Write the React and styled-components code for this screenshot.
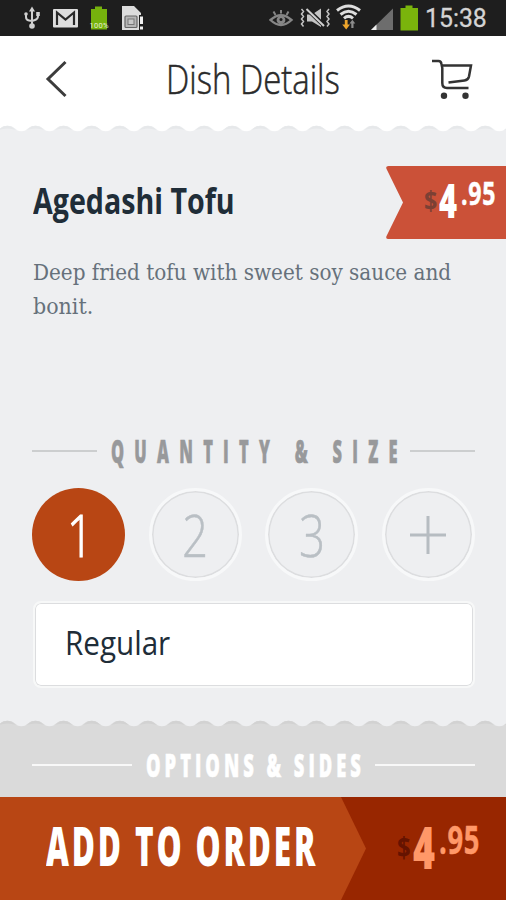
import { useLayoutEffect, useRef, useState } from 'react';
import styled, { createGlobalStyle } from 'styled-components';

const SANS = "'Open Sans', 'Noto Sans', sans-serif";
const SERIF = "'DejaVu Serif Condensed', 'DejaVu Serif', serif";

const GlobalStyle = createGlobalStyle`
    * {
        box-sizing: border-box;
    }
    body {
        margin: 0;
    }
    button {
        border: none;
        padding: 0;
        background: none;
        font: inherit;
        color: inherit;
    }
`;

const FitBox = styled.span`
    display: block;
    flex: none;
    width: ${(p) => p.$width}px;
    white-space: nowrap;
    text-align: left;
`;

const FitInner = styled.span`
    display: inline-block;
    transform-origin: left center;
`;

// narrows the text so that it fills exactly the given width
const FitText = ({ width, children, ...rest }) => {
    const ref = useRef(null);
    const [scale, setScale] = useState(1);

    useLayoutEffect(() => {
        setScale(width / ref.current.offsetWidth);
    }, [width, children]);

    return (
        <FitBox $width={width} {...rest}>
            <FitInner ref={ref} style={{ transform: `scaleX(${scale})` }}>
                {children}
            </FitInner>
        </FitBox>
    );
};

const Screen = styled.div`
    display: flex;
    flex-direction: column;
    width: 506px;
    height: 900px;
    overflow: hidden;
    background: #eeeff1;
    font-family: ${SANS};
`;

const StatusBar = styled.div`
    display: flex;
    justify-content: space-between;
    height: 36px;
    background: #1e1e1e;
`;

const StatusRight = styled.div`
    display: flex;
    padding-right: 19px;
`;

const Clock = styled(FitText)`
    font-family: Roboto, sans-serif;
    font-size: 26px;
    line-height: 36px;
    color: #d4d4d4;
    -webkit-text-stroke: 0.3px #d4d4d4;
`;

const Header = styled.div`
    display: flex;
    align-items: center;
    justify-content: space-between;
    height: 89px;
    padding: 0 33px 3px 45px;
    background: #fff;
`;

const PageTitle = styled(FitText)`
    margin-left: 5px;
    font-size: 39.5px;
    font-weight: 300;
    line-height: 54px;
    color: #2a2a2a;
    -webkit-text-stroke: 0.5px #2a2a2a;
`;

const ScallopEdge = styled.svg`
    display: block;
    flex: none;
    width: 506px;
    height: 8px;
    background: ${(p) => p.$above};
`;

const Dish = styled.div`
    height: 294px;
    padding: 33px 0 0 33px;
`;

const DishTop = styled.div`
    display: flex;
    justify-content: space-between;
    height: 73px;
`;

const DishName = styled(FitText)`
    font-size: 36px;
    font-weight: 700;
    line-height: 70px;
    color: #202d38;
`;

const Tag = styled.div`
    position: relative;
    width: 120px;
`;

const TagShape = styled.svg`
    position: absolute;
    inset: 0;
`;

const Price = styled.div`
    display: flex;
    align-items: center;
`;

const TagPrice = styled(Price)`
    position: relative;
    height: 73px;
    padding: 0 0 5px 38px;
    color: #fff;
`;

const Currency = styled(FitText)`
    font-size: ${(p) => p.$size}px;
    font-weight: 700;
    line-height: 1;
    color: ${(p) => p.$color};
`;

const Whole = styled(FitText)`
    margin-left: 2px;
    font-size: ${(p) => p.$size}px;
    font-weight: 800;
    line-height: 1;
`;

const Cents = styled(FitText)`
    margin: -15px 0 0 4px;
    font-size: ${(p) => p.$size}px;
    font-weight: 700;
    line-height: 1;
    letter-spacing: 1px;
    -webkit-text-stroke: 0.5px currentColor;
`;

const Description = styled.div`
    margin-top: 16px;
    font-family: ${SERIF};
    font-size: 22.5px;
    line-height: 34px;
    color: #66717b;
`;

const Rule = styled.div`
    flex: 1;
    height: 2px;
    background: currentColor;
`;

// the letter spacing after the last letter must not push the right rule away
const HeadingText = styled(FitText)`
    margin-right: -${(p) => p.$trail}px;
    font-size: 32px;
    font-weight: 800;
    line-height: 50px;
    letter-spacing: ${(p) => p.$spacing}px;
    -webkit-text-stroke: 0.6px currentColor;
`;

const HeadingRow = styled.div`
    display: flex;
    align-items: center;
    gap: 14px;
    height: 50px;
    margin: 0 31px 0 32px;
    color: ${(p) => (p.$tone === 'white' ? '#f8f8f8' : '#cccecf')};

    ${HeadingText} {
        color: ${(p) => (p.$tone === 'white' ? '#fff' : '#98999b')};
    }
`;

const QuantityRow = styled.div`
    display: flex;
    justify-content: space-between;
    height: 93px;
    margin: 12px 31px 0 32px;
`;

const QuantityButton = styled.button`
    display: flex;
    align-items: center;
    justify-content: center;
    width: 93px;
    height: 93px;
    padding-left: ${(p) => (p.$active ? '3px' : '0')};
    border: ${(p) => (p.$active ? 'none' : '3px solid #f7f8f9')};
    border-radius: 50%;
    box-shadow: ${(p) => (p.$active ? 'none' : 'inset 0 0 0 1.5px #dcdddf')};
    background: ${(p) => (p.$active ? '#b84614' : 'transparent')};
    color: ${(p) => (p.$active ? '#fff' : '#b9bfc4')};
    font-size: 58px;
    font-weight: 300;
    line-height: 80px;
    -webkit-text-stroke: ${(p) => (p.$active ? '1.2px' : '0.5px')} currentColor;
`;

const Select = styled.div`
    height: 87px;
    margin: 20px 31px 32px 33px;
    padding-left: 30px;
    border: 2px solid #f7f8f8;
    border-radius: 8px;
    box-shadow: inset 0 0 0 1px #dcdddf;
    background: #fff;
    font-size: 33px;
    line-height: 80px;
    color: #202d38;
`;

const Options = styled.div`
    height: 69px;
    padding-top: 12px;
    background: #dadada;
`;

const OrderBar = styled.div`
    display: flex;
    height: 103px;
    background: #982600;
`;

const AddButton = styled.button`
    width: 366px;
    padding: 0 0 7px 46px;
    background: #b84614;
    clip-path: polygon(0 0, 341px 0, 366px 50%, 341px 100%, 0 100%);
    font-size: 55px;
    font-weight: 800;
    line-height: 96px;
    color: #fff;
    letter-spacing: 5px;
`;

const OrderPrice = styled(Price)`
    padding: 0 0 4px 31px;
    color: #ff9868;
`;

const Scallop = ({ name, above, fill, edge }) => (
    <ScallopEdge viewBox="0 0 506 8" $above={above}>
        <defs>
            <pattern id={name} x="-6.7" width="28.11" height="8" patternUnits="userSpaceOnUse">
                <path d="M0 6.3C3 6.3 5 5 7.5 3C11 .1 17.1 .1 20.6 3C23.1 5 25.1 6.3 28.11 6.3V8H0Z" fill={fill} />
                <path d="M5 5L7.5 3C11 .1 17.1 .1 20.6 3L23.1 5Q14 2 5 5Z" fill={edge} />
            </pattern>
        </defs>
        <rect width="506" height="8" fill={`url(#${name})`} />
    </ScallopEdge>
);

const StatusIcons = () => (
    <svg width="150" height="36" viewBox="0 0 150 36">
        {/* usb */}
        <g fill="none" stroke="#d0d0d0" strokeWidth="2">
            <path d="M32 10V26M26 14V17Q26 20 29 20.5L32 21M38 14V16Q38 19 35 20L32 21" />
        </g>
        <path d="M32 6.5L35 11.5H29Z" fill="#d0d0d0" />
        <circle cx="32" cy="26" r="2.8" fill="#d0d0d0" />
        <circle cx="26" cy="14" r="1.8" fill="#d0d0d0" />
        <path d="M36.2 12H39.8V16H36.2Z" fill="#d0d0d0" />
        {/* gmail */}
        <rect x="53" y="9" width="25" height="18.5" rx="1" fill="#dedede" />
        <path d="M57 25V12.5L65.5 19.5L74 12.5V25" fill="none" stroke="#292929" strokeWidth="2.2" />
        {/* battery */}
        <path d="M95 6.5H102V9H107V29.5H91V9H95Z" fill="#76b20d" />
        <text x="89.5" y="28" fontSize="7.5" fontFamily="Roboto, sans-serif" fill="#e4efd0" textLength="19">
            100%
        </text>
        {/* sim card */}
        <path d="M122 6H134L141 13V15H139V30H122Z" fill="#dcdcdc" />
        <rect x="125" y="16" width="12" height="11.5" rx="1" fill="#b5b5b5" stroke="#666" strokeWidth="1.2" />
        <rect x="128" y="19" width="6" height="5.5" fill="#c8c8c8" stroke="#777" />
        <path d="M140 16.5H143V24H140ZM140 26.5H143V29.5H140Z" fill="#f0f0f0" />
    </svg>
);

const SignalIcons = () => (
    <svg width="156" height="36" viewBox="268 0 156 36">
        {/* eye */}
        <path d="M269.5 20Q280 10.5 290.5 20Q280 30 269.5 20Z" fill="none" stroke="#858585" strokeWidth="2.4" />
        <circle cx="280" cy="20" r="4.4" fill="#858585" />
        <circle cx="280" cy="19.5" r="1.5" fill="#1e1e1e" />
        <path d="M280 10V13.5M272.5 11.5L274.5 15M287.5 11.5L285.5 15" stroke="#858585" strokeWidth="2" />
        {/* vibrate, muted */}
        <path d="M306 14.5H311L320 8.5V27L311 21.5H306Z" fill="#c4c4c4" />
        <path d="M305 8L324 26.5" stroke="#1e1e1e" strokeWidth="4.5" />
        <path d="M305.5 9L323 26" stroke="#d0d0d0" strokeWidth="2" />
        <path
            d="M300.5 9l2 2.5l-2 2.5l2 2.5l-2 2.5l2 2.5l-2 2.5l2 2.5M328 9l-2 2.5l2 2.5l-2 2.5l2 2.5l-2 2.5l2 2.5l-2 2.5"
            fill="none"
            stroke="#c4c4c4"
            strokeWidth="1.5"
        />
        {/* wifi */}
        <g fill="none" stroke="#dedede" strokeWidth="3">
            <path d="M336 10.5Q347.5 1.5 359 10.5" />
            <path d="M339.5 14.5Q347.5 8 355.5 14.5" />
            <path d="M343 18.3Q347.5 14.5 352 18.3" />
        </g>
        <path d="M343.8 20H346.6V24.5H349L345.2 29.5L341.2 24.5H343.8Z" fill="#eda52c" />
        <path d="M350.3 28V23.5H348.5L351.4 19.8L354.3 23.5H352.5V28Z" fill="#8d8d8d" />
        {/* signal */}
        <path d="M392 8.5V30H370Z" fill="#6d6d6d" />
        <path d="M375.5 24.6V30H370Z" fill="#eee" />
        {/* battery */}
        <path d="M404.5 5.5H411.5V8H417V30.5H399.5V8H404.5Z" fill="#7ab40c" />
    </svg>
);

const BackIcon = () => (
    <svg width="24" height="38" viewBox="0 0 24 38" fill="none" stroke="#3c3c3c" strokeWidth="3">
        <path d="M20.5 2L3 19L20.5 36" />
    </svg>
);

const CartIcon = () => (
    <svg width="42" height="42" viewBox="431 59 42 42" fill="none" stroke="#333" strokeWidth="2.5">
        <path d="M432 62H438.5Q441 62 441.5 65L442.3 69V84Q442.3 89 447 89H468.5" />
        <path d="M442.3 66.5H471L469 77.5Q468.2 81 464.5 81.5L448.5 83.5" />
        <circle cx="444" cy="96.7" r="3.2" fill="#333" stroke="none" />
        <circle cx="465.5" cy="96.7" r="3.2" fill="#333" stroke="none" />
    </svg>
);

const PlusIcon = () => (
    <svg width="36" height="38" viewBox="0 0 36 38" stroke="#b6bcc1" strokeWidth="3">
        <path d="M0 19H36M18 0V38" />
    </svg>
);

const Heading = ({ children, width, tone, spacing, trail }) => (
    <HeadingRow $tone={tone}>
        <Rule />
        <HeadingText width={width} $spacing={spacing} $trail={trail}>
            {children}
        </HeadingText>
        <Rule />
    </HeadingRow>
);

const QUANTITIES = ['1', '2', '3'];

const App = () => {
    const [selected, setSelected] = useState('1');

    return (
        <Screen>
            <GlobalStyle />
            <StatusBar>
                <StatusIcons />
                <StatusRight>
                    <SignalIcons />
                    <Clock width={62}>15:38</Clock>
                </StatusRight>
            </StatusBar>

            <Header>
                <BackIcon />
                <PageTitle width={174}>Dish Details</PageTitle>
                <CartIcon />
            </Header>
            <Scallop name="header-wave" above="#fff" fill="#eeeff1" edge="#e6e8ea" />

            <Dish>
                <DishTop>
                    <DishName width={202}>Agedashi Tofu</DishName>
                    <Tag>
                        <TagShape viewBox="0 0 120 73">
                            <path
                                d="M2.5 0H120V73H2.5Q-1 73 .8 69.5L17 36.5L.8 3.5Q-1 0 2.5 0Z"
                                fill="#cb5138"
                            />
                        </TagShape>
                        <TagPrice>
                            <Currency width={13} $size={27} $color="#7c4034">
                                $
                            </Currency>
                            <Whole width={18} $size={48}>
                                4
                            </Whole>
                            <Cents width={35} $size={33}>
                                .95
                            </Cents>
                        </TagPrice>
                    </Tag>
                </DishTop>
                <Description>
                    <FitText width={418}>Deep fried tofu with sweet soy sauce and</FitText>
                    <FitText width={60}>bonit.</FitText>
                </Description>
            </Dish>

            <Heading width={297} tone="grey" spacing={20} trail={12}>
                QUANTITY &amp; SIZE
            </Heading>
            <QuantityRow>
                {QUANTITIES.map((q) => (
                    <QuantityButton key={q} $active={q === selected} onClick={() => setSelected(q)}>
                        <FitText width={26}>{q}</FitText>
                    </QuantityButton>
                ))}
                <QuantityButton>
                    <PlusIcon />
                </QuantityButton>
            </QuantityRow>
            <Select>
                <FitText width={105}>Regular</FitText>
            </Select>

            <Scallop name="options-wave" above="#eeeff1" fill="#dadada" edge="#d2d2d2" />
            <Options>
                <Heading width={219} tone="white" spacing={7} trail={4}>
                    OPTIONS &amp; SIDES
                </Heading>
            </Options>

            <OrderBar>
                <AddButton>
                    <FitText width={272}>ADD TO ORDER</FitText>
                </AddButton>
                <OrderPrice>
                    <Currency width={14} $size={29} $color="#651300">
                        $
                    </Currency>
                    <Whole width={22} $size={58}>
                        4
                    </Whole>
                    <Cents width={41} $size={40}>
                        .95
                    </Cents>
                </OrderPrice>
            </OrderBar>
        </Screen>
    );
};

export default App;
